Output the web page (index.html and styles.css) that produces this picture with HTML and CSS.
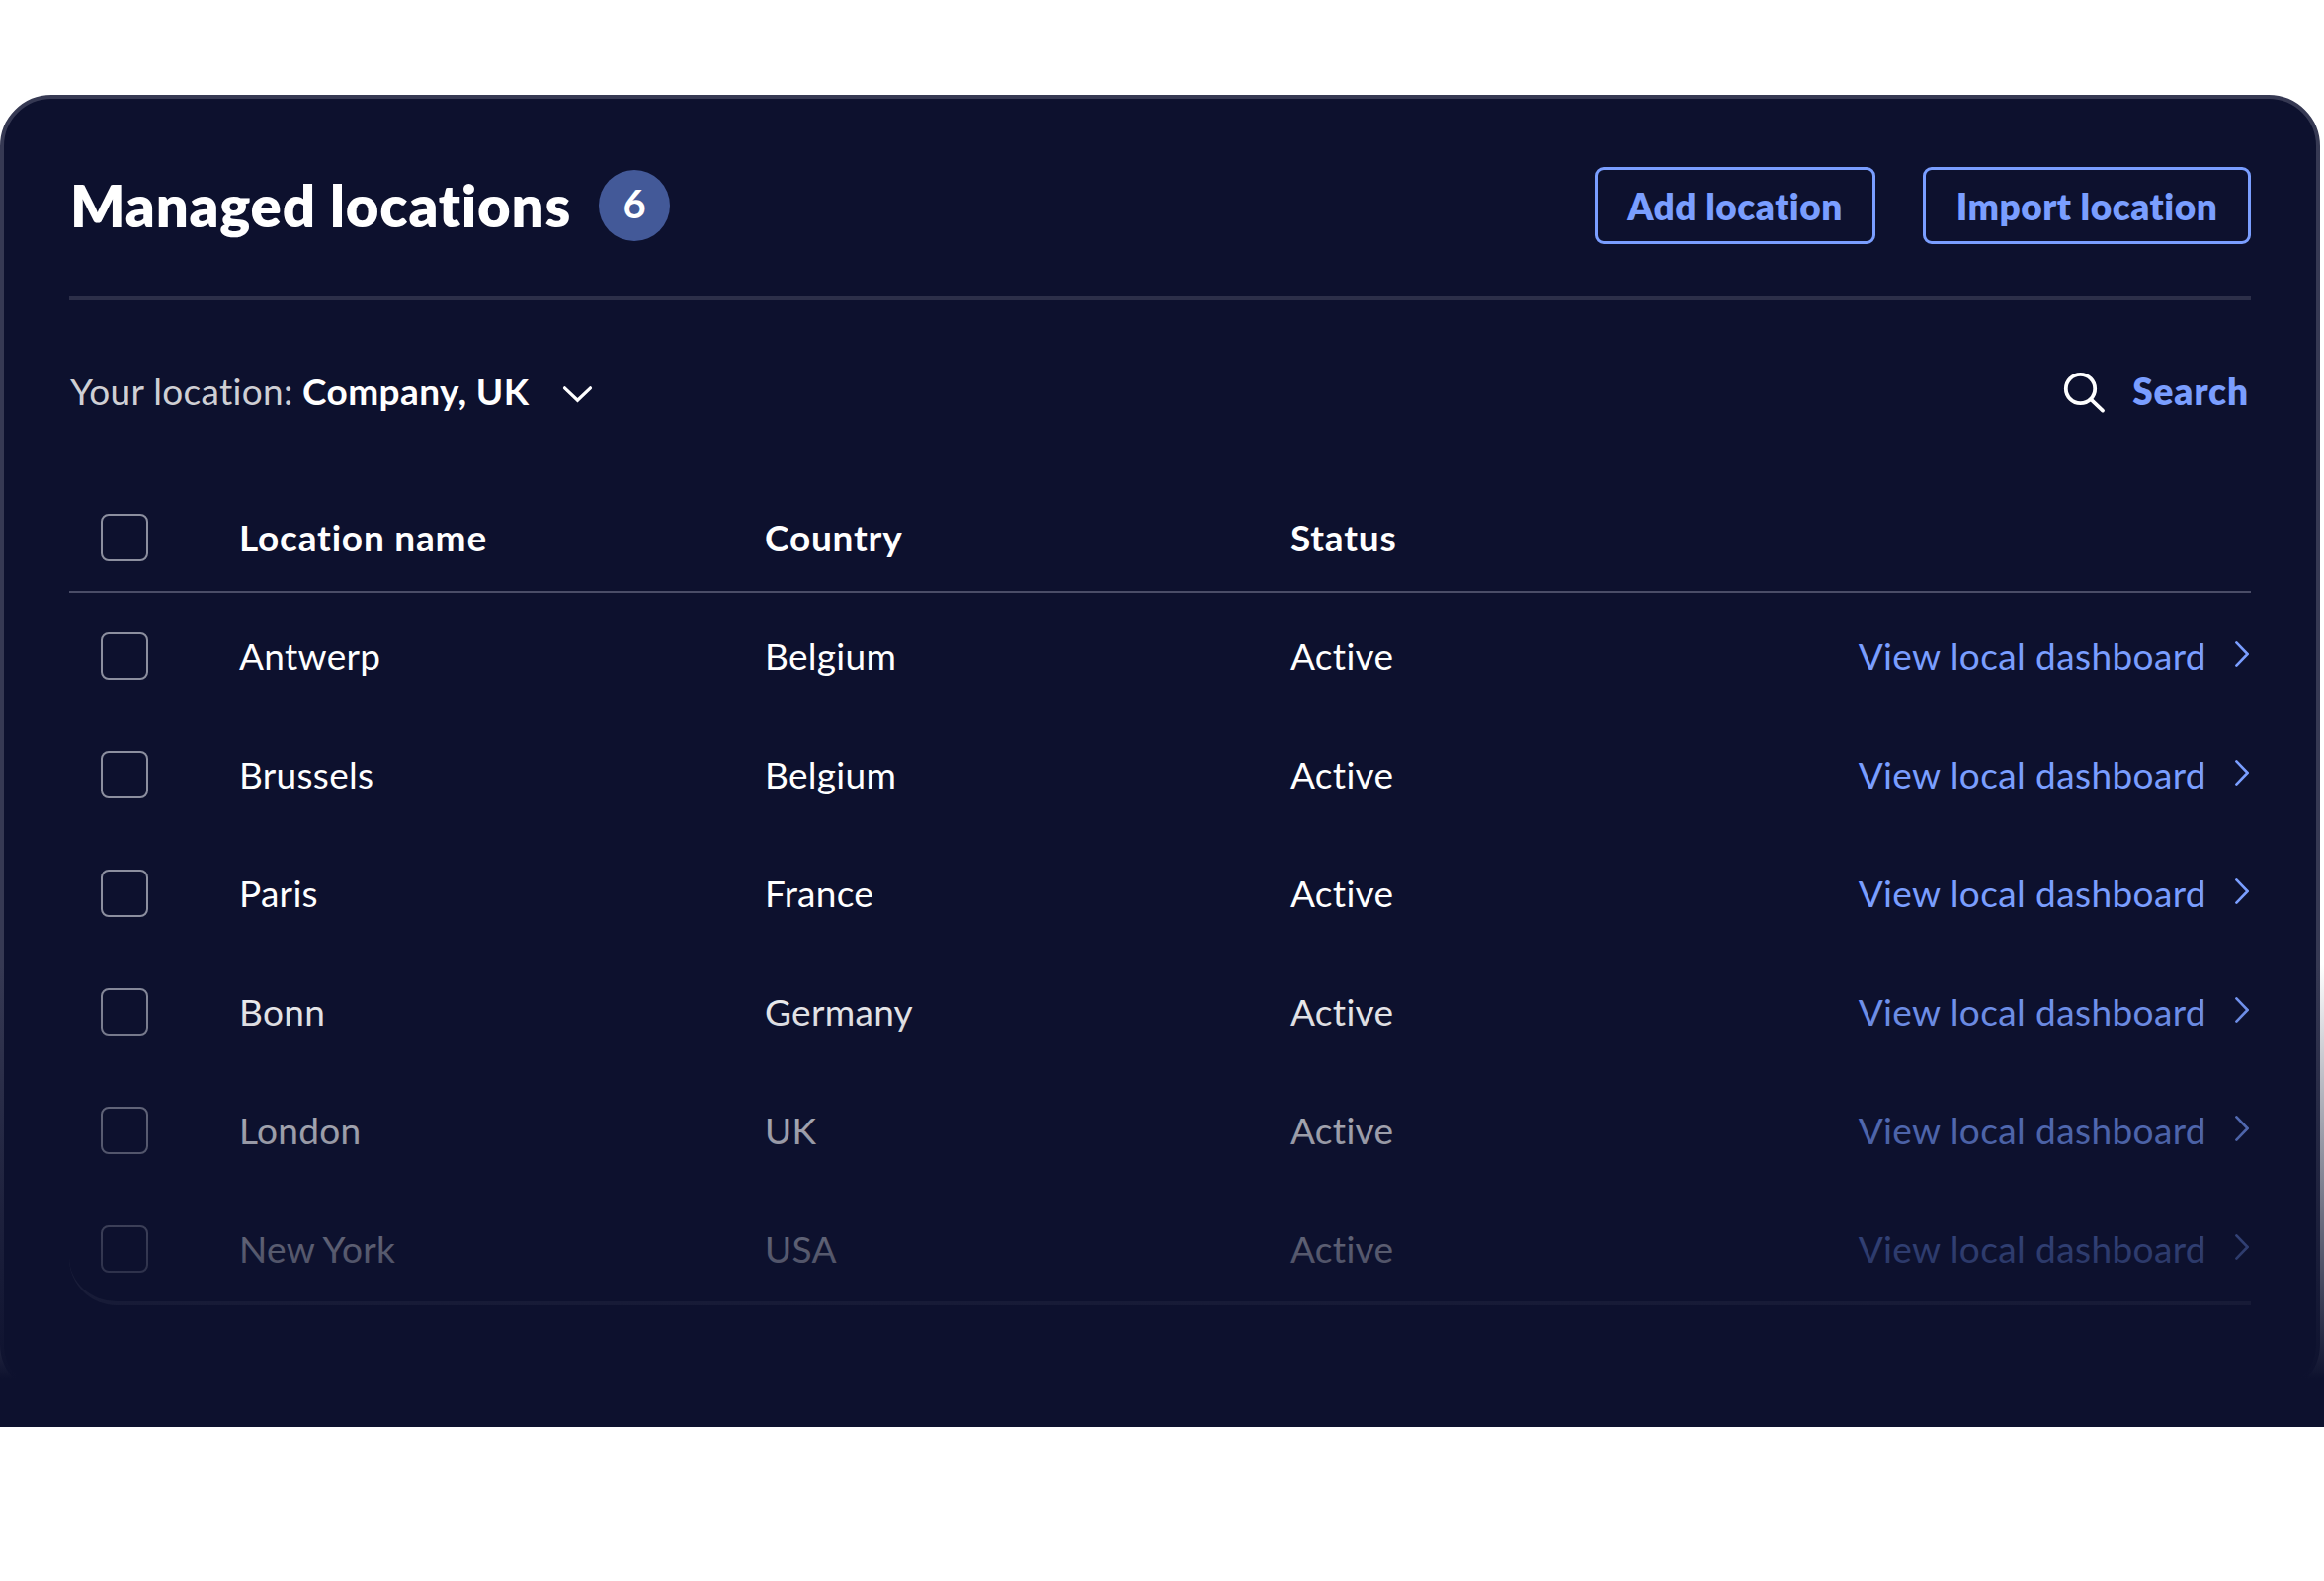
FILE: index.html
```html
<!DOCTYPE html>
<html lang="en">
<head>
    <meta charset="UTF-8">
    <title>Managed locations</title>
    <link rel="stylesheet" href="styles.css">
</head>
<body>

<div class="stage">
    <main class="panel">
        <header class="panel-header">
            <h1>Managed locations</h1>
            <span class="count">6</span>
            <button class="btn btn-add" type="button">Add location</button>
            <button class="btn btn-import" type="button">Import location</button>
        </header>

        <div class="toolbar">
            <div class="picker">
                <span class="picker-label">Your location:</span>
                <span class="picker-value">Company, UK</span>
                <svg class="chevron-down" viewBox="0 0 31 18"><path d="M2.5 2.8l13 12.4L28.5 2.8"/></svg>
            </div>
            <div class="search">
                <svg class="search-icon" viewBox="0 0 44 44"><circle cx="18.5" cy="18.5" r="14.7"/><path d="M29.2 29.4L41 40.6"/></svg>
                <span>Search</span>
            </div>
        </div>

        <div class="table">
            <div class="row row-head">
                <span class="checkbox"></span>
                <span>Location name</span>
                <span>Country</span>
                <span>Status</span>
            </div>
            <div class="row">
                <span class="checkbox"></span>
                <span>Antwerp</span>
                <span>Belgium</span>
                <span>Active</span>
                <a class="link">View local dashboard<svg class="chevron" viewBox="0 0 14 26"><path d="M1.4 1.4L12.6 13 1.4 24.6"/></svg></a>
            </div>
            <div class="row">
                <span class="checkbox"></span>
                <span>Brussels</span>
                <span>Belgium</span>
                <span>Active</span>
                <a class="link">View local dashboard<svg class="chevron" viewBox="0 0 14 26"><path d="M1.4 1.4L12.6 13 1.4 24.6"/></svg></a>
            </div>
            <div class="row">
                <span class="checkbox"></span>
                <span>Paris</span>
                <span>France</span>
                <span>Active</span>
                <a class="link">View local dashboard<svg class="chevron" viewBox="0 0 14 26"><path d="M1.4 1.4L12.6 13 1.4 24.6"/></svg></a>
            </div>
            <div class="row">
                <span class="checkbox"></span>
                <span>Bonn</span>
                <span>Germany</span>
                <span>Active</span>
                <a class="link">View local dashboard<svg class="chevron" viewBox="0 0 14 26"><path d="M1.4 1.4L12.6 13 1.4 24.6"/></svg></a>
            </div>
            <div class="row">
                <span class="checkbox"></span>
                <span>London</span>
                <span>UK</span>
                <span>Active</span>
                <a class="link">View local dashboard<svg class="chevron" viewBox="0 0 14 26"><path d="M1.4 1.4L12.6 13 1.4 24.6"/></svg></a>
            </div>
            <div class="row">
                <span class="checkbox"></span>
                <span>New York</span>
                <span>USA</span>
                <span>Active</span>
                <a class="link">View local dashboard<svg class="chevron" viewBox="0 0 14 26"><path d="M1.4 1.4L12.6 13 1.4 24.6"/></svg></a>
            </div>
        </div>
    </main>
    <div class="fade"></div>
</div>

</body>
</html>
```

FILE: styles.css
```css
* {
    box-sizing: border-box;
}

body {
    margin: 0;
    background: #fff;
    font-family: Lato, sans-serif;
    font-size: 37px;
    font-variant-ligatures: none;
    line-height: 48px;
    color: #fff;
}

.stage {
    position: relative;
    width: 2352px;
    height: 1444px;
    padding-top: 96px;
}

.panel {
    width: 2348px;
    height: 1316px;
    padding: 0 66px;
    background: #0d112e;
    border: 4px solid #363953;
    border-radius: 52px;
}

.panel-header {
    display: flex;
    align-items: center;
    height: 204px;
    padding-top: 16px;
    border-bottom: 4px solid #2c2f49;
}

h1 {
    margin: 0;
    padding-left: 1px;
    width: 536px;
    font-size: 58px;
    font-weight: 800;
    letter-spacing: 0.8px;
    line-height: 72px;
    white-space: nowrap;
}

.count {
    width: 72px;
    height: 72px;
    border-radius: 50%;
    background: #435998;
    font-size: 40px;
    font-weight: 700;
    line-height: 69px;
    text-align: center;
}

.btn {
    height: 78px;
    padding: 0;
    border: 3px solid #7a9eff;
    border-radius: 9px;
    background: none;
    color: #7a9eff;
    font-family: inherit;
    font-size: 37px;
    font-weight: 800;
    letter-spacing: 0.5px;
}

.btn-add {
    width: 284px;
    margin-left: auto;
}

.btn-import {
    width: 332px;
    margin-left: 48px;
}

.toolbar {
    display: flex;
    justify-content: space-between;
    align-items: center;
    height: 184px;
}

.picker,
.search {
    display: flex;
    align-items: center;
}

.picker-label {
    width: 236px;
    padding-left: 1px;
    color: #cfcfd4;
    letter-spacing: 0.3px;
    white-space: nowrap;
}

.picker-value {
    width: 263px;
    font-weight: 700;
    letter-spacing: 0.4px;
    white-space: nowrap;
}

.chevron-down {
    width: 31px;
    height: 18px;
    margin-top: 5px;
    fill: none;
    stroke: #fff;
    stroke-width: 3.2;
    stroke-linecap: round;
}

.search {
    margin-right: 2px;
    color: #7a9eff;
    font-weight: 800;
    letter-spacing: 0.9px;
}

.search-icon {
    width: 44px;
    height: 44px;
    margin-top: 2px;
    margin-right: 27px;
    fill: none;
    stroke: #fff;
    stroke-width: 3.8;
    stroke-linecap: round;
}

.table {
    height: 833px;
    border-bottom: 4px solid #44475f;
    border-bottom-left-radius: 48px;
}

.row {
    display: grid;
    grid-template-columns: 140px 532px 532px 300px 1fr;
    align-items: center;
    height: 120px;
    padding-left: 32px;
    letter-spacing: 0.3px;
}

.row-head {
    height: 112px;
    margin-bottom: 4px;
    padding-top: 2px;
    border-bottom: 2px solid #4a4d67;
    font-weight: 700;
    letter-spacing: 0.8px;
}

.checkbox {
    width: 48px;
    height: 48px;
    border: 2px solid #8c8f9f;
    border-radius: 8px;
}

.link {
    display: flex;
    justify-content: flex-end;
    align-items: center;
    color: #7a9eff;
    letter-spacing: 0.4px;
}

.chevron {
    width: 14px;
    height: 26px;
    margin: -5px 2px 0 29px;
    fill: none;
    stroke: #7a9eff;
    stroke-width: 2.6;
    stroke-linecap: round;
}

/* bottom of the list dissolves into the page colour */
.fade {
    position: absolute;
    left: 0;
    right: 0;
    bottom: 0;
    height: 468px;
    background: linear-gradient(rgba(13, 17, 46, 0), #0d112e 420px);
}
```
